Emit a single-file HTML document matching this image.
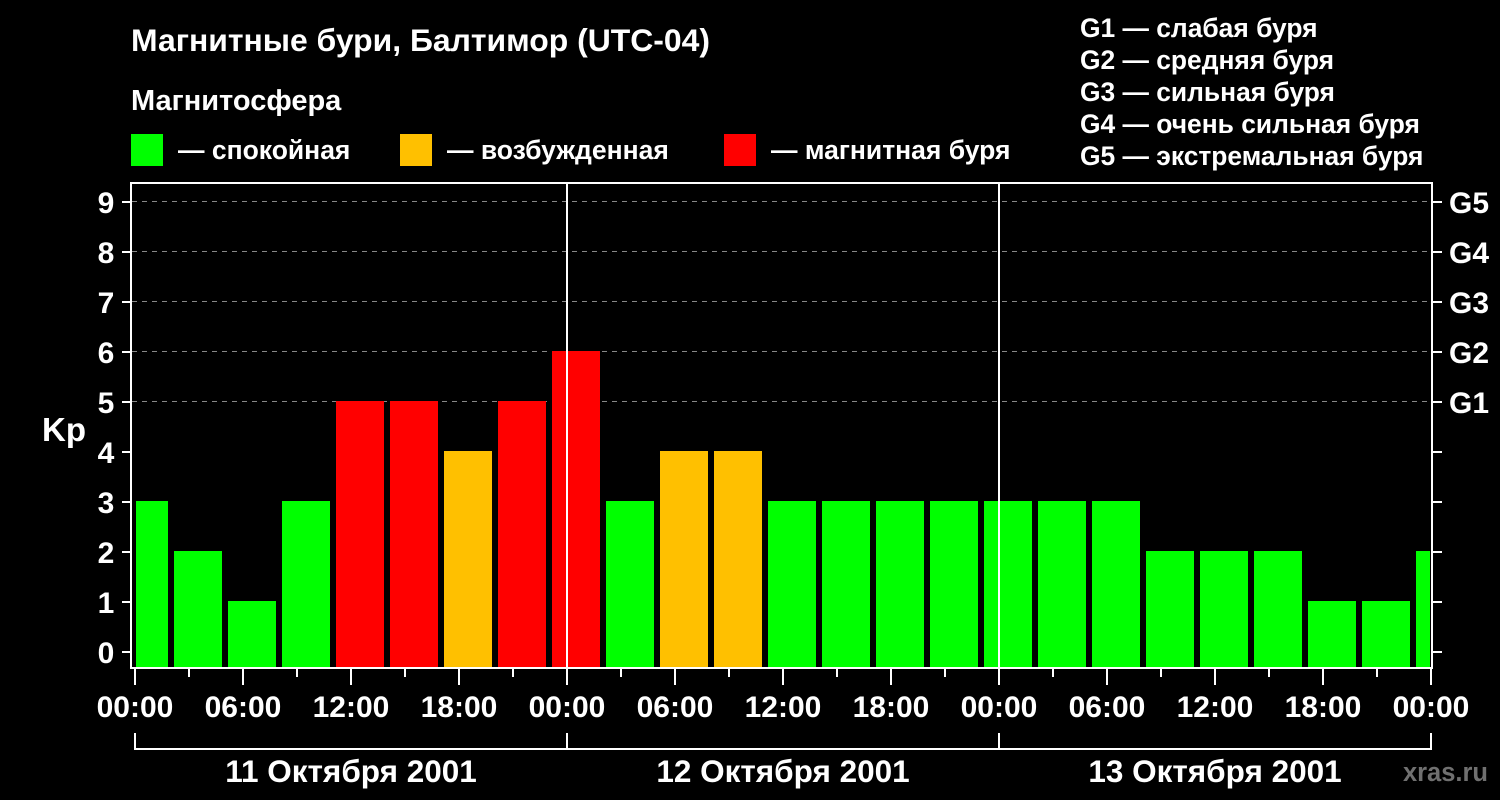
<!DOCTYPE html>
<html><head><meta charset="utf-8"><style>
html,body{margin:0;padding:0;background:#000;}
svg{display:block;}
text{font-family:"Liberation Sans",sans-serif;font-weight:bold;fill:#fff;}
</style></head><body>
<svg width="1500" height="800" viewBox="0 0 1500 800" xmlns="http://www.w3.org/2000/svg">
<rect width="1500" height="800" fill="#000"/>
<text x="131" y="51" font-size="31.9">Магнитные бури, Балтимор (UTC-04)</text>
<text x="131" y="110" font-size="29">Магнитосфера</text>
<rect x="131" y="134" width="32" height="32" fill="#00ff00"/>
<text x="178" y="159" font-size="26.5">— спокойная</text>
<rect x="400" y="134" width="32" height="32" fill="#ffc000"/>
<text x="447" y="159" font-size="26.5">— возбужденная</text>
<rect x="724" y="134" width="32" height="32" fill="#ff0000"/>
<text x="771" y="159" font-size="26.5">— магнитная буря</text>
<g font-size="26.4">
<text x="1080" y="37">G1 — слабая буря</text>
<text x="1080" y="69">G2 — средняя буря</text>
<text x="1080" y="101">G3 — сильная буря</text>
<text x="1080" y="133">G4 — очень сильная буря</text>
<text x="1080" y="165">G5 — экстремальная буря</text>
</g>
<g stroke="#888" stroke-width="1" stroke-dasharray="5,5">
<line x1="132" y1="201.5" x2="1432" y2="201.5"/>
<line x1="132" y1="251.5" x2="1432" y2="251.5"/>
<line x1="132" y1="301.5" x2="1432" y2="301.5"/>
<line x1="132" y1="351.5" x2="1432" y2="351.5"/>
<line x1="132" y1="401.5" x2="1432" y2="401.5"/>
</g>
<g>
<rect x="136" y="501" width="32" height="166" fill="#00ff00"/>
<rect x="174" y="551" width="48" height="116" fill="#00ff00"/>
<rect x="228" y="601" width="48" height="66" fill="#00ff00"/>
<rect x="282" y="501" width="48" height="166" fill="#00ff00"/>
<rect x="336" y="401" width="48" height="266" fill="#ff0000"/>
<rect x="390" y="401" width="48" height="266" fill="#ff0000"/>
<rect x="444" y="451" width="48" height="216" fill="#ffc000"/>
<rect x="498" y="401" width="48" height="266" fill="#ff0000"/>
<rect x="552" y="351" width="48" height="316" fill="#ff0000"/>
<rect x="606" y="501" width="48" height="166" fill="#00ff00"/>
<rect x="660" y="451" width="48" height="216" fill="#ffc000"/>
<rect x="714" y="451" width="48" height="216" fill="#ffc000"/>
<rect x="768" y="501" width="48" height="166" fill="#00ff00"/>
<rect x="822" y="501" width="48" height="166" fill="#00ff00"/>
<rect x="876" y="501" width="48" height="166" fill="#00ff00"/>
<rect x="930" y="501" width="48" height="166" fill="#00ff00"/>
<rect x="984" y="501" width="48" height="166" fill="#00ff00"/>
<rect x="1038" y="501" width="48" height="166" fill="#00ff00"/>
<rect x="1092" y="501" width="48" height="166" fill="#00ff00"/>
<rect x="1146" y="551" width="48" height="116" fill="#00ff00"/>
<rect x="1200" y="551" width="48" height="116" fill="#00ff00"/>
<rect x="1254" y="551" width="48" height="116" fill="#00ff00"/>
<rect x="1308" y="601" width="48" height="66" fill="#00ff00"/>
<rect x="1362" y="601" width="48" height="66" fill="#00ff00"/>
<rect x="1416" y="551" width="14" height="116" fill="#00ff00"/>
</g>
<rect x="131" y="183" width="1301" height="485" fill="none" stroke="#fff" stroke-width="2"/>
<line x1="567" y1="182" x2="567" y2="668" stroke="#fff" stroke-width="2"/>
<line x1="999" y1="182" x2="999" y2="668" stroke="#fff" stroke-width="2"/>
<g stroke="#fff" stroke-width="2">
<line x1="122" y1="652" x2="131" y2="652"/><line x1="1432" y1="652" x2="1442" y2="652"/>
<line x1="122" y1="602" x2="131" y2="602"/><line x1="1432" y1="602" x2="1442" y2="602"/>
<line x1="122" y1="552" x2="131" y2="552"/><line x1="1432" y1="552" x2="1442" y2="552"/>
<line x1="122" y1="502" x2="131" y2="502"/><line x1="1432" y1="502" x2="1442" y2="502"/>
<line x1="122" y1="452" x2="131" y2="452"/><line x1="1432" y1="452" x2="1442" y2="452"/>
<line x1="122" y1="402" x2="131" y2="402"/><line x1="1432" y1="402" x2="1442" y2="402"/>
<line x1="122" y1="352" x2="131" y2="352"/><line x1="1432" y1="352" x2="1442" y2="352"/>
<line x1="122" y1="302" x2="131" y2="302"/><line x1="1432" y1="302" x2="1442" y2="302"/>
<line x1="122" y1="252" x2="131" y2="252"/><line x1="1432" y1="252" x2="1442" y2="252"/>
<line x1="122" y1="202" x2="131" y2="202"/><line x1="1432" y1="202" x2="1442" y2="202"/>
</g>
<g font-size="30" text-anchor="middle">
<text x="106" y="663">0</text><text x="106" y="613">1</text><text x="106" y="563">2</text>
<text x="106" y="513">3</text><text x="106" y="463">4</text><text x="106" y="413">5</text>
<text x="106" y="363">6</text><text x="106" y="313">7</text><text x="106" y="263">8</text>
<text x="106" y="213">9</text>
</g>
<text x="42" y="441" font-size="33">Kp</text>
<g font-size="30">
<text x="1449" y="413">G1</text><text x="1449" y="363">G2</text><text x="1449" y="313">G3</text>
<text x="1449" y="263">G4</text><text x="1449" y="213">G5</text>
</g>
<g stroke="#fff" stroke-width="2">
<line x1="135" y1="669" x2="135" y2="685"/><line x1="189" y1="669" x2="189" y2="677"/>
<line x1="243" y1="669" x2="243" y2="685"/><line x1="297" y1="669" x2="297" y2="677"/>
<line x1="351" y1="669" x2="351" y2="685"/><line x1="405" y1="669" x2="405" y2="677"/>
<line x1="459" y1="669" x2="459" y2="685"/><line x1="513" y1="669" x2="513" y2="677"/>
<line x1="567" y1="669" x2="567" y2="685"/><line x1="621" y1="669" x2="621" y2="677"/>
<line x1="675" y1="669" x2="675" y2="685"/><line x1="729" y1="669" x2="729" y2="677"/>
<line x1="783" y1="669" x2="783" y2="685"/><line x1="837" y1="669" x2="837" y2="677"/>
<line x1="891" y1="669" x2="891" y2="685"/><line x1="945" y1="669" x2="945" y2="677"/>
<line x1="999" y1="669" x2="999" y2="685"/><line x1="1053" y1="669" x2="1053" y2="677"/>
<line x1="1107" y1="669" x2="1107" y2="685"/><line x1="1161" y1="669" x2="1161" y2="677"/>
<line x1="1215" y1="669" x2="1215" y2="685"/><line x1="1269" y1="669" x2="1269" y2="677"/>
<line x1="1323" y1="669" x2="1323" y2="685"/><line x1="1377" y1="669" x2="1377" y2="677"/>
<line x1="1431" y1="669" x2="1431" y2="685"/>
<polyline points="135,733 135,749 1431,749 1431,733" fill="none"/>
<line x1="567" y1="733" x2="567" y2="749"/>
<line x1="999" y1="733" x2="999" y2="749"/>
</g>
<g font-size="30" text-anchor="middle">
<text x="135" y="717">00:00</text><text x="243" y="717">06:00</text><text x="351" y="717">12:00</text>
<text x="459" y="717">18:00</text><text x="567" y="717">00:00</text><text x="675" y="717">06:00</text>
<text x="783" y="717">12:00</text><text x="891" y="717">18:00</text><text x="999" y="717">00:00</text>
<text x="1107" y="717">06:00</text><text x="1215" y="717">12:00</text><text x="1323" y="717">18:00</text>
<text x="1431" y="717">00:00</text>
</g>
<g font-size="31.5" text-anchor="middle">
<text x="351" y="782">11 Октября 2001</text>
<text x="783" y="782">12 Октября 2001</text>
<text x="1215" y="782">13 Октября 2001</text>
</g>
<text x="1488" y="781" font-size="25.5" text-anchor="end" style="fill:#707070">xras.ru</text>
</svg>
</body></html>
